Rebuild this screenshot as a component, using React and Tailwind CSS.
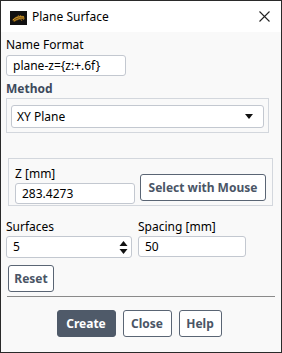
import React from 'react';

const font = { fontFamily: '"Noto Sans", "Open Sans", sans-serif' };

const TitleIcon = () => (
  <svg width="17" height="14" viewBox="0 0 17 14">
    <rect width="17" height="14" fill="#111" />
    <path d="M2 9 C5 5, 9 4, 14 5 L15 8 C11 8, 7 9, 4 11 Z" fill="#6b4a12" />
    <path d="M3 9 C6 6, 10 5, 14 6" stroke="#d9a431" strokeWidth="1" fill="none" />
    <path d="M4 10 C7 8, 10 7, 14 7" stroke="#c08a22" strokeWidth="1" fill="none" />
    <path d="M8 4 L12 10 M10 4 L14 9" stroke="#a07020" strokeWidth="0.8" fill="none" />
  </svg>
);

const Field = ({ value, className }) => (
  <div className={`h-[21px] bg-white border border-[#c3c8d0] rounded-[3px] px-[6px] flex items-center text-[12px] text-black ${className}`}>
    {value}
  </div>
);

const Btn = ({ children, primary, className = '' }) => (
  <button
    className={`h-[27px] rounded-[3px] border px-[5px] text-[12px] font-bold whitespace-nowrap ${
      primary ? 'bg-[#4f5a69] border-[#4f5a69] text-white' : 'bg-white border-[#5a6574] text-[#4a5566]'
    } ${className}`}
  >
    {children}
  </button>
);

export default function App() {
  return (
    <div style={font} className="w-[282px] h-[353px] border border-[#2a2a2a] bg-[#f9f9f9] flex flex-col overflow-hidden">
      {/* title bar */}
      <div className="h-[31px] bg-white flex items-center shrink-0">
        <div className="ml-[9px] mt-[3px]">
          <TitleIcon />
        </div>
        <span className="ml-[5px] mt-[1px] text-[12px] text-black">Plane Surface</span>
        <svg className="ml-auto mr-[11px]" width="11" height="11" viewBox="0 0 11 11">
          <path d="M0.5 0.5 L10.5 10.5 M10.5 0.5 L0.5 10.5" stroke="#222" strokeWidth="1.1" />
        </svg>
      </div>

      <div className="flex flex-col px-[5px] text-[12px] text-black">
        <div className="mt-[5px] h-[16px] leading-[16px]">Name Format</div>
        <Field value="plane-z={z:+.6f}" className="mt-[2px] w-[120px]" />

        <div className="mt-[5px] h-[16px] leading-[16px] font-bold text-[#3d4a5c]">Method</div>
        <div className="mt-[1px] w-[263px] border border-[#d3d7dd] pt-[6px] pb-[4px] pl-[4px]">
          <div className="h-[23px] w-[253px] bg-white border border-[#c3c8d0] rounded-[3px] flex items-center px-[5px]">
            <span>XY Plane</span>
            <svg className="ml-auto mr-[5px]" width="8" height="5" viewBox="0 0 8 5">
              <path d="M0 0 H8 L4 5 Z" fill="#111" />
            </svg>
          </div>
        </div>

        <div className="mt-[25px] ml-[2px] w-[265px] h-[48px] shrink-0 border border-[#d3d7dd] flex items-start pl-[6px] pt-[6px]">
          <div className="flex flex-col">
            <div className="h-[16px] leading-[16px] mt-[1px]">Z [mm]</div>
            <Field value="283.4273" className="mt-[1px] w-[120px] h-[20px]" />
          </div>
          <Btn className="ml-[5px] mt-[9px] w-[126px] px-0">Select with Mouse</Btn>
        </div>

        <div className="mt-[13px] flex">
          <div className="flex flex-col">
            <div className="h-[16px] leading-[16px]">Surfaces</div>
            <div className="mt-[1px] h-[22px] w-[126px] bg-white border border-[#c3c8d0] rounded-[3px] flex items-center pl-[6px]">
              <span>5</span>
              <svg className="ml-auto mr-[3px]" width="9" height="15" viewBox="0 0 9 15">
                <path d="M0.5 6 L4.5 1 L8.5 6 Z" fill="#111" />
                <path d="M0.5 9 L4.5 14 L8.5 9 Z" fill="#111" />
              </svg>
            </div>
          </div>
          <div className="flex flex-col ml-[6px]">
            <div className="h-[16px] leading-[16px]">Spacing [mm]</div>
            <Field value="50" className="mt-[1px] w-[108px] h-[20px]" />
          </div>
        </div>

        <Btn className="mt-[7px] ml-[2px] w-[46px]">Reset</Btn>

        <div className="mt-[4px] ml-[1px] mr-[1px] h-px bg-[#8a8a8a]" />

        <div className="mt-[13px] flex justify-center gap-[7px] pr-[4px]">
          <Btn primary className="w-[59px]">Create</Btn>
          <Btn className="w-[49px]">Close</Btn>
          <Btn className="w-[43px]">Help</Btn>
        </div>
      </div>
    </div>
  );
}
